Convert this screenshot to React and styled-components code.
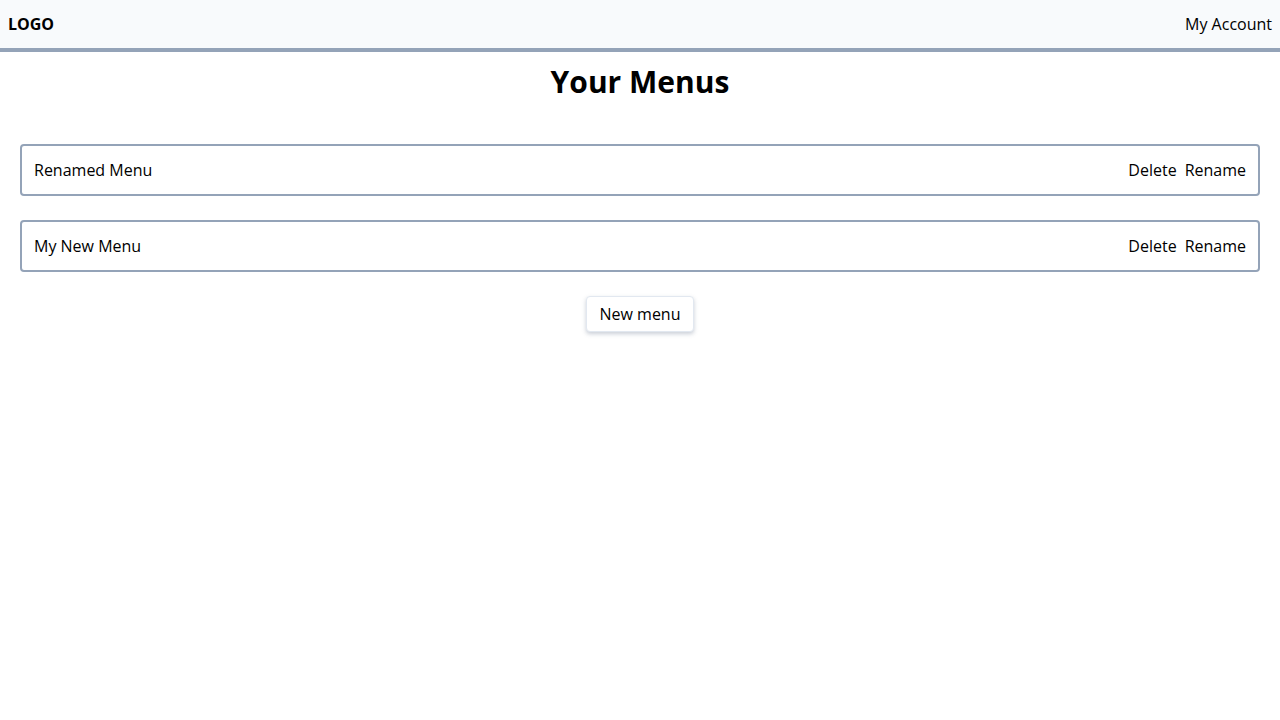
import React from 'react';
import styled, { createGlobalStyle } from 'styled-components';

const GlobalStyle = createGlobalStyle`
    body {
        margin: 0;
        font-family: "Open Sans", "Noto Sans", sans-serif;
        color: #000;
        background: #fff;
    }
`

// Styled Components

const Header = styled.header`
    display: flex;
    align-items: center;
    justify-content: space-between;
    height: 48px;
    padding: 0 8px;
    background: #f8fafc;
    border-bottom: 4px solid #94a3b8;
    font-size: 16px;
`

const Logo = styled.div`
    font-weight: 700;
`

const Main = styled.main`
    display: flex;
    flex-direction: column;
    align-items: center;
    padding: 8px 20px;
`

const Title = styled.h1`
    margin: 0 0 40px;
    font-size: 30px;
    line-height: 44px;
    font-weight: 700;
`

const MenuList = styled.div`
    display: flex;
    flex-direction: column;
    gap: 24px;
    width: 100%;
`

const MenuRow = styled.div`
    display: flex;
    align-items: center;
    justify-content: space-between;
    box-sizing: border-box;
    height: 52px;
    padding: 0 12px;
    border: 2px solid #94a3b8;
    border-radius: 4px;
    font-size: 16px;
`

const Actions = styled.div`
    display: flex;
    gap: 8px;
`

const TextButton = styled.button`
    padding: 0;
    border: none;
    background: none;
    font: inherit;
    color: inherit;
    cursor: pointer;
`

const NewButton = styled.button`
    margin-top: 24px;
    box-sizing: border-box;
    height: 36px;
    padding: 0 12px;
    background: #fff;
    border: 1px solid #e2e8f0;
    border-radius: 4px;
    box-shadow: 0 2px 4px rgba(100, 116, 139, 0.35);
    font: inherit;
    font-size: 16px;
    color: #000;
    cursor: pointer;
`

const menus = ['Renamed Menu', 'My New Menu'];

const App = () => {
    return (
        <>
            <GlobalStyle />
            <Header>
                <Logo>LOGO</Logo>
                <div>My Account</div>
            </Header>
            <Main>
                <Title>Your Menus</Title>
                <MenuList>
                    {menus.map(name => (
                        <MenuRow key={name}>
                            <span>{name}</span>
                            <Actions>
                                <TextButton>Delete</TextButton>
                                <TextButton>Rename</TextButton>
                            </Actions>
                        </MenuRow>
                    ))}
                </MenuList>
                <NewButton>New menu</NewButton>
            </Main>
        </>
    )
}

export default App;
